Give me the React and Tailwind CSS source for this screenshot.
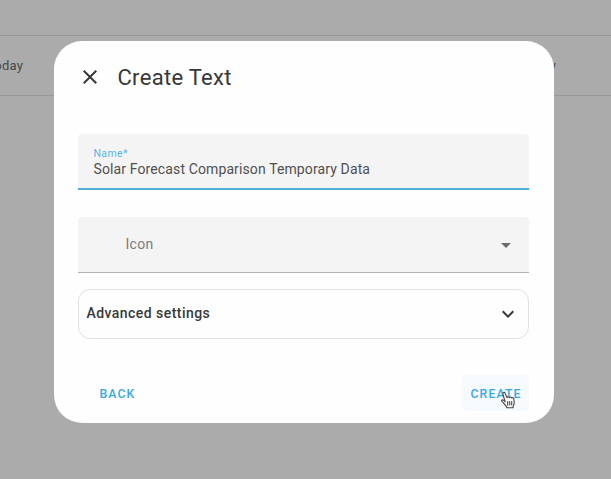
import { useState } from 'react';

// ─── Icons ──────────────────────────────────────────────────────────────────

function CloseIcon() {
  return (
    <svg viewBox="0 0 24 24" fill="currentColor" className="w-6 h-6">
      <path d="M19 6.41L17.59 5 12 10.59 6.41 5 5 6.41 10.59 12 5 17.59 6.41 19 12 13.41 17.59 19 19 17.59 13.41 12z" />
    </svg>
  );
}

function ChevronDownIcon() {
  return (
    <svg viewBox="0 0 24 24" fill="currentColor" className="w-6 h-6">
      <path d="M7.41 8.58L12 13.17l4.59-4.59L18 10l-6 6-6-6z" />
    </svg>
  );
}

function HandCursor() {
  return (
    <svg
      viewBox="0 0 16 18"
      fill="#fff"
      stroke="#454545"
      strokeWidth="1.1"
      strokeLinecap="round"
      strokeLinejoin="round"
      className="absolute left-[38px] top-[16px] w-4 h-[18px] pointer-events-none"
    >
      <path d="M5.2 10.8L2.9 3.2C2.4 1.5 4.5.7 5.2 2.4L7 6.7C7.2 5.5 9 5.4 9.4 6.7C9.8 5.7 11.3 5.8 11.7 7C12.4 6.2 13.6 6.6 13.8 7.8L14.2 11C14.4 13 13.8 14.1 13.1 15.2V16.8H6.8V15.6C5.2 14.3 4 12.3 2.1 10.7C.9 9.6 2.2 8.3 3.5 9.2Z" />
      <path d="M7.7 10.5v3.5M9.7 10.5v3.5M11.7 10.5v3.5" />
    </svg>
  );
}

// ─── Page behind the dialog ─────────────────────────────────────────────────

function PageBackdrop() {
  return (
    <div className="w-full h-full bg-[#ababab] pt-[35px] overflow-hidden">
      <div className="flex items-center justify-between h-[61px] border-y border-[#989898] text-[13px] tracking-[0.2px] text-[#484848]">
        <span className="-ml-[13px]">Today</span>
        <span className="mr-[55px]">Today</span>
      </div>
    </div>
  );
}

// ─── Create dialog ──────────────────────────────────────────────────────────

function CreateTextDialog() {
  const [name, setName] = useState('Solar Forecast Comparison Temporary Data');

  return (
    <div
      className="w-[500px] h-[382px] rounded-[28px] bg-[#fefefe] pl-6 pr-[24.5px] pt-6 text-[#383838]"
      role="dialog"
    >
      {/* Header */}
      <div className="flex items-center h-6">
        <button aria-label="Close">
          <CloseIcon />
        </button>
        <h2 className="ml-4 text-[22px] leading-6 tracking-[0.3px] pt-px">Create Text</h2>
      </div>

      {/* Name */}
      <label className="flex flex-col h-[56px] mt-[45px] px-4 pt-[13px] rounded-t bg-[#f4f4f4] border-b-2 border-[#4fb0d8]">
        <span className="text-[10.5px] leading-[13px] tracking-[0.35px] text-[#58b5e8]">Name*</span>
        <input
          className="h-[18px] w-full bg-transparent text-[14px] leading-[18px] tracking-[0.12px] text-[#505050] outline-none"
          value={name}
          onChange={(e) => setName(e.target.value)}
        />
      </label>

      {/* Icon picker */}
      <div className="flex items-center justify-between h-[56px] mt-[27px] pl-12 pr-[18.5px] rounded-t bg-[#f4f4f4] border-b border-[#b2b2b2]">
        <span className="text-[14px] tracking-[0.3px] text-[#7b7b7b]">Icon</span>
        <svg viewBox="0 0 10 5" fill="#6c6c6c" className="w-[10px] h-[5px] mt-[2px]">
          <path d="M0 0h10L5 5z" />
        </svg>
      </div>

      {/* Advanced settings */}
      <button className="flex items-center justify-between w-full h-[50px] mt-4 pl-2 pr-2 rounded-xl border border-[#e2e2e2]">
        <span className="-mt-[2px] text-[14px] font-medium tracking-[0.45px]">Advanced settings</span>
        <ChevronDownIcon />
      </button>

      {/* Actions */}
      <div className="flex justify-between mt-9 text-[12.25px] font-medium tracking-[1.1px] text-[#38a9e3]">
        <button className="h-9 ml-[14px] px-2 pt-[3px]">BACK</button>
        <button className="relative w-[67px] h-9 pl-px pt-[3px] rounded bg-[#f6fafd]">
          CREATE
          <HandCursor />
        </button>
      </div>
    </div>
  );
}

export default function App() {
  return (
    <div className="relative w-full h-screen overflow-hidden font-[Roboto,sans-serif]">
      <PageBackdrop />
      <div className="absolute inset-0 flex items-start pl-[53.5px] pt-[41px]">
        <CreateTextDialog />
      </div>
    </div>
  );
}
